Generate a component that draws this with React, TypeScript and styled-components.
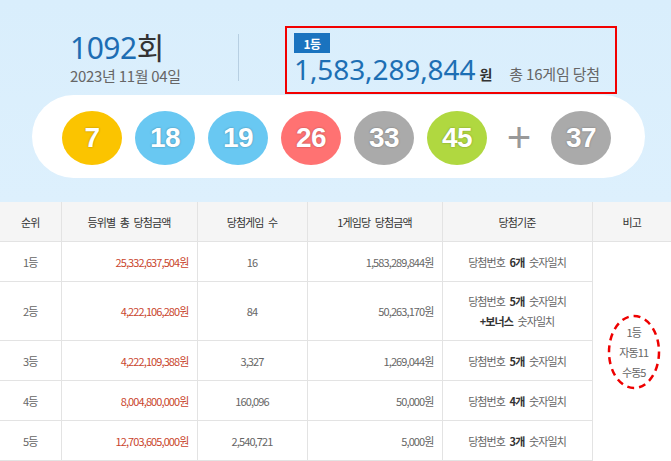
import React from "react";
import styled, { createGlobalStyle } from "styled-components";

const Global = createGlobalStyle`
  html, body { margin: 0; padding: 0; background: #fff; }
  body { font-family: "Noto Sans", "Noto Sans CJK KR", sans-serif; width: 671px; overflow: hidden; }
`;

const Page = styled.div`
  width: 671px;
  height: 461px;
  overflow: hidden;
`;

const Hero = styled.section`
  height: 202px;
  background: linear-gradient(#d9eefc, #ddf0fd);
  display: flex;
  flex-direction: column;
  padding-top: 26px;
  box-sizing: border-box;
`;

const Summary = styled.div`
  display: flex;
  align-items: center;
  padding-left: 70px;
  height: 68px;
`;

const RoundBlock = styled.div`
  width: 168px;
  display: flex;
  flex-direction: column;
  margin-top: -3px;
`;

const RoundTitle = styled.div`
  font-family: "Noto Sans", "Noto Sans CJK KR", sans-serif;
  font-size: 30px;
  line-height: 32px;
  color: #333;
  letter-spacing: -0.5px;
  & > b { font-weight: 400; color: #1d6db3; }
`;

const RoundDate = styled.div`
  font-family: "Noto Sans CJK KR", sans-serif;
  font-size: 15px;
  line-height: 20px;
  color: #666;
  letter-spacing: -0.3px;
  margin-top: 2px;
`;

const Divider = styled.div`
  width: 1px;
  height: 47px;
  background: #b7cfe2;
  margin-top: -6px;
`;

const Highlight = styled.div`
  margin-left: 46px;
  width: 332px;
  height: 68px;
  box-sizing: border-box;
  border: 2px solid #f20000;
  padding: 5px 0 0 7px;
  display: flex;
  flex-direction: column;
  align-items: flex-start;
`;

const Badge = styled.span`
  display: inline-flex;
  align-items: center;
  justify-content: center;
  width: 36px;
  height: 20px;
  background: #1a73bf;
  color: #fff;
  font-family: "Noto Sans CJK KR", sans-serif;
  font-weight: 700;
  font-size: 12px;
  letter-spacing: -0.5px;
`;

const PrizeLine = styled.div`
  display: flex;
  align-items: baseline;
  margin-top: -2px;
`;

const PrizeAmount = styled.span`
  font-family: "Noto Sans", sans-serif;
  font-size: 28px;
  line-height: 36px;
  color: #1d6fb4;
  letter-spacing: -0.1px;
`;

const PrizeUnit = styled.span`
  font-family: "Noto Sans CJK KR", sans-serif;
  font-weight: 700;
  font-size: 14px;
  color: #333;
  margin-left: 4px;
`;

const PrizeNote = styled.span`
  font-family: "Noto Sans CJK KR", sans-serif;
  font-size: 15px;
  color: #666;
  margin-left: 17px;
  letter-spacing: -0.2px;
`;

const Pill = styled.div`
  margin: 1px 0 0 32px;
  width: 613px;
  height: 83px;
  border-radius: 42px;
  background: #fff;
  display: flex;
  align-items: center;
  padding-left: 30px;
  box-sizing: border-box;
  gap: 13px;
`;

const Ball = styled.span<{ $color: string }>`
  width: 60px;
  height: 54px;
  border-radius: 50%;
  background: ${(p) => p.$color};
  display: flex;
  align-items: center;
  justify-content: center;
  color: #fff;
  font-family: "Liberation Sans", sans-serif;
  font-weight: 700;
  font-size: 28px;
  letter-spacing: -0.5px;
  text-shadow: 0 0 2px rgba(0, 0, 0, 0.35);
  margin-top: 3px;
`;

const Plus = styled.span`
  width: 38px;
  text-align: center;
  font-family: "Liberation Sans", sans-serif;
  font-size: 42px;
  line-height: 42px;
  color: #999;
  margin-top: 2px;
`;

const Table = styled.table`
  width: 671px;
  border-collapse: collapse;
  table-layout: fixed;
  font-family: "Noto Sans CJK KR", sans-serif;
  font-size: 11px;
  letter-spacing: -0.9px;
  word-spacing: 3px;
`;

const Th = styled.th`
  height: 39px;
  padding: 0;
  background: #f5f5f5;
  color: #333;
  font-weight: 400;
  border-right: 1px solid #e3e3e3;
  border-bottom: 1px solid #e3e3e3;
  &:last-child { border-right: none; }
`;

const Td = styled.td<{ $align?: string; $red?: boolean; $h?: number }>`
  height: ${(p) => p.$h ?? 39}px;
  padding: ${(p) => (p.$align === "right" ? "0 8px 0 0" : "0")};
  text-align: ${(p) => p.$align ?? "center"};
  color: ${(p) => (p.$red ? "#c9452d" : "#666")};
  border-right: 1px solid #e3e3e3;
  border-bottom: 1px solid #e3e3e3;
  line-height: 20px;
  & b { color: #333; font-weight: 700; }
`;

const NoteCell = styled.td`
  padding: 0;
  text-align: center;
  vertical-align: middle;
  color: #666;
`;

const NoteMark = styled.div`
  position: relative;
  display: inline-flex;
  flex-direction: column;
  align-items: center;
  line-height: 20px;
  font-size: 11px;
  margin-left: 4px;
  margin-top: 2px;
  & > svg {
    position: absolute;
    left: 50%;
    top: 50%;
    transform: translate(-50%, -50%);
  }
`;

const balls: { n: number; c: string }[] = [
  { n: 7, c: "#fbc400" },
  { n: 18, c: "#69c8f2" },
  { n: 19, c: "#69c8f2" },
  { n: 26, c: "#ff7272" },
  { n: 33, c: "#aaaaaa" },
  { n: 45, c: "#b0d840" },
];

const rows = [
  { rank: "1등", total: "25,332,637,504원", count: "16", per: "1,583,289,844원", n: "6개" },
  { rank: "2등", total: "4,222,106,280원", count: "84", per: "50,263,170원", n: "5개", bonus: true },
  { rank: "3등", total: "4,222,109,388원", count: "3,327", per: "1,269,044원", n: "5개" },
  { rank: "4등", total: "8,004,800,000원", count: "160,096", per: "50,000원", n: "4개" },
  { rank: "5등", total: "12,703,605,000원", count: "2,540,721", per: "5,000원", n: "3개" },
];

export default function App() {
  return (
    <Page>
      <Global />
      <Hero>
        <Summary>
          <RoundBlock>
            <RoundTitle>
              <b>1092</b>회
            </RoundTitle>
            <RoundDate>2023년 11월 04일</RoundDate>
          </RoundBlock>
          <Divider />
          <Highlight>
            <Badge>1등</Badge>
            <PrizeLine>
              <PrizeAmount>1,583,289,844</PrizeAmount>
              <PrizeUnit>원</PrizeUnit>
              <PrizeNote>총 16게임 당첨</PrizeNote>
            </PrizeLine>
          </Highlight>
        </Summary>
        <Pill>
          {balls.map((b) => (
            <Ball key={b.n} $color={b.c}>
              {b.n}
            </Ball>
          ))}
          <Plus>+</Plus>
          <Ball $color="#aaaaaa">37</Ball>
        </Pill>
      </Hero>
      <Table>
        <colgroup>
          <col style={{ width: 61 }} />
          <col style={{ width: 136 }} />
          <col style={{ width: 110 }} />
          <col style={{ width: 135 }} />
          <col style={{ width: 150 }} />
          <col style={{ width: 79 }} />
        </colgroup>
        <thead>
          <tr>
            <Th>순위</Th>
            <Th>등위별 총 당첨금액</Th>
            <Th>당첨게임 수</Th>
            <Th>1게임당 당첨금액</Th>
            <Th>당첨기준</Th>
            <Th>비고</Th>
          </tr>
        </thead>
        <tbody>
          {rows.map((r, i) => (
            <tr key={r.rank}>
              <Td $h={r.bonus ? 58 : 39}>{r.rank}</Td>
              <Td $align="right" $red>
                {r.total}
              </Td>
              <Td>{r.count}</Td>
              <Td $align="right">{r.per}</Td>
              <Td>
                당첨번호 <b>{r.n}</b> 숫자일치
                {r.bonus && (
                  <>
                    <br />
                    <b>+보너스</b> 숫자일치
                  </>
                )}
              </Td>
              {i === 0 && (
                <NoteCell rowSpan={5}>
                  <NoteMark>
                    <span>1등</span>
                    <span>자동11</span>
                    <span>수동5</span>
                    <svg width="56" height="78" viewBox="0 0 56 78">
                      <ellipse
                        cx="28"
                        cy="39"
                        rx="25"
                        ry="36"
                        fill="none"
                        stroke="#ee0000"
                        strokeWidth="2.5"
                        strokeDasharray="7 5"
                      />
                    </svg>
                  </NoteMark>
                </NoteCell>
              )}
            </tr>
          ))}
        </tbody>
      </Table>
    </Page>
  );
}
